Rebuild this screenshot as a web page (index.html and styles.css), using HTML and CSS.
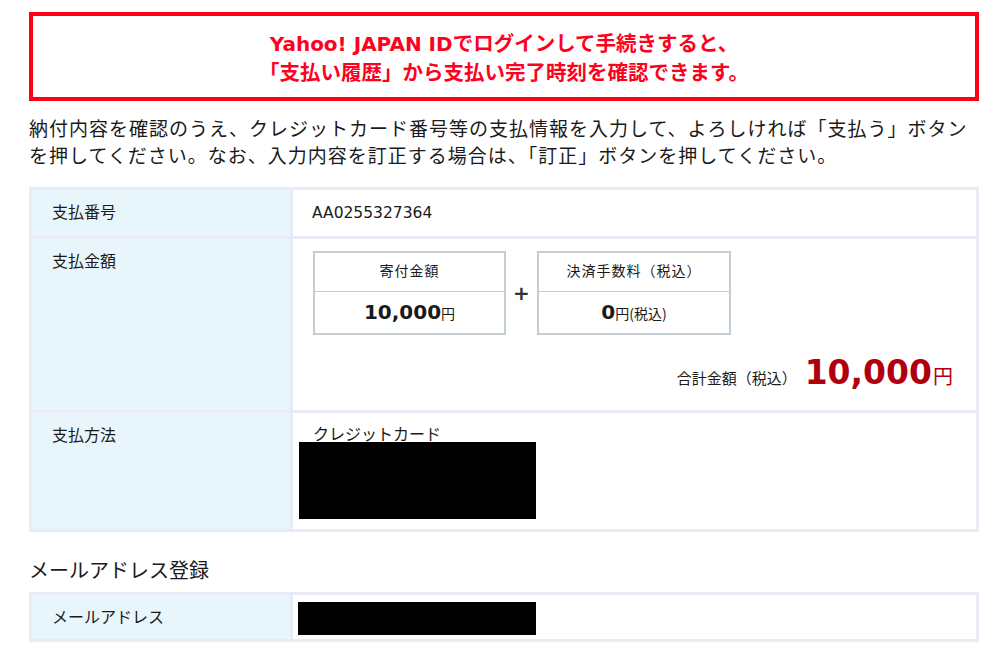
FILE: index.html
```html
<!DOCTYPE html>
<html lang="ja">
<head>
<meta charset="utf-8">
<title>支払内容確認</title>
<link rel="stylesheet" href="styles.css">
</head>
<body>
<div class="page">
  <div class="notice">
    <p><span class="latin">Yahoo! JAPAN ID</span>でログインして手続きすると、<br>「支払い履歴」から支払い完了時刻を確認できます。</p>
  </div>

  <p class="intro">納付内容を確認のうえ、クレジットカード番号等の支払情報を入力して、よろしければ「支払う」ボタンを押してください。なお、入力内容を訂正する場合は、「訂正」ボタンを押してください。</p>

  <div class="table">
    <div class="label">支払番号</div>
    <div class="value"><span class="id">AA0255327364</span></div>

    <div class="label">支払金額</div>
    <div class="value amount">
      <div class="boxes">
        <div class="box">
          <div class="box-head">寄付金額</div>
          <div class="box-body"><span class="num">10,000</span><span class="yen">円</span></div>
        </div>
        <div class="plus">+</div>
        <div class="box">
          <div class="box-head">決済手数料（税込）</div>
          <div class="box-body"><span class="num">0</span><span class="yen">円(税込)</span></div>
        </div>
      </div>
      <div class="total">
        <span class="total-label">合計金額（税込）</span>
        <span class="total-num">10,000</span>
        <span class="total-yen">円</span>
      </div>
    </div>

    <div class="label">支払方法</div>
    <div class="value method">
      <div class="method-name">クレジットカード</div>
      <div class="redact redact-card"></div>
    </div>
  </div>

  <h2 class="section">メールアドレス登録</h2>

  <div class="table">
    <div class="label">メールアドレス</div>
    <div class="value mail">
      <div class="redact redact-mail"></div>
    </div>
  </div>
</div>
</body>
</html>
```

FILE: styles.css
```css
* { box-sizing: border-box; }

html, body {
  margin: 0;
  padding: 0;
  background: #ffffff;
}

body {
  font-family: "Noto Sans CJK JP", "Liberation Sans", sans-serif;
  color: #1a1a1a;
}

.page {
  width: 950px;
  margin: 12px auto 0;
}

.notice {
  border: 4px solid #ff0019;
  padding: 12px 0 11px;
  text-align: center;
}

.notice p {
  margin: 0;
  color: #ff0020;
  font-weight: bold;
  font-size: 20.5px;
  line-height: 29px;
}

.notice .latin {
  font-family: "DejaVu Sans", sans-serif;
  font-size: 20px;
  line-height: 1;
}

.intro {
  margin: 13px 0 19px;
  font-size: 19px;
  letter-spacing: 1px;
  line-height: 27px;
}

.table {
  display: grid;
  grid-template-columns: 258px 1fr;
  gap: 3px;
  padding: 3px;
  background: #ebebf8;
}

.label {
  background: #e8f6fc;
  padding: 10px 20px 12px;
  font-size: 16px;
  line-height: 22px;
}

.value {
  background: #ffffff;
  padding: 10px 19px 12px;
  font-size: 16px;
  line-height: 22px;
}

.id {
  font-family: "DejaVu Sans", sans-serif;
  font-size: 15.5px;
}

.amount {
  padding: 12px 23px 21px 20px;
}

.boxes {
  display: flex;
  align-items: center;
}

.box {
  width: 193px;
  border: 2px solid #c3cdd4;
  text-align: center;
}

.box + .plus + .box {
  width: 194px;
}

.box-head {
  height: 39px;
  border-bottom: 1px solid #c3cdd4;
  font-size: 14px;
  letter-spacing: 1px;
  line-height: 34px;
}

.box-body {
  height: 41px;
  line-height: 41px;
}

.num {
  font-family: "DejaVu Sans", sans-serif;
  font-weight: bold;
  font-size: 20px;
}

.yen {
  font-size: 14px;
}

.plus {
  width: 31px;
  text-align: center;
  font-family: "DejaVu Sans", sans-serif;
  font-weight: bold;
  font-size: 20px;
  color: #333333;
}

.total {
  display: flex;
  justify-content: flex-end;
  align-items: baseline;
  margin-top: 21px;
  line-height: 1;
}

.total-label {
  font-size: 15px;
  margin-right: 8px;
}

.total-num {
  font-family: "DejaVu Sans", sans-serif;
  font-weight: bold;
  font-size: 33px;
  line-height: 33px;
  color: #b00010;
}

.total-yen {
  font-size: 20px;
  color: #b00010;
  margin-left: 1px;
}

.method {
  padding: 11px 19px 10px 6px;
}

.method-name {
  margin-left: 14px;
  line-height: 18px;
}

.redact {
  background: #000000;
}

.redact-card {
  width: 237px;
  height: 77px;
}

.mail {
  padding: 7px 0 4px 5px;
}

.redact-mail {
  width: 238px;
  height: 33px;
}

.section {
  margin: 24px 0 8px;
  font-size: 20px;
  font-weight: normal;
  line-height: 28px;
}
```
